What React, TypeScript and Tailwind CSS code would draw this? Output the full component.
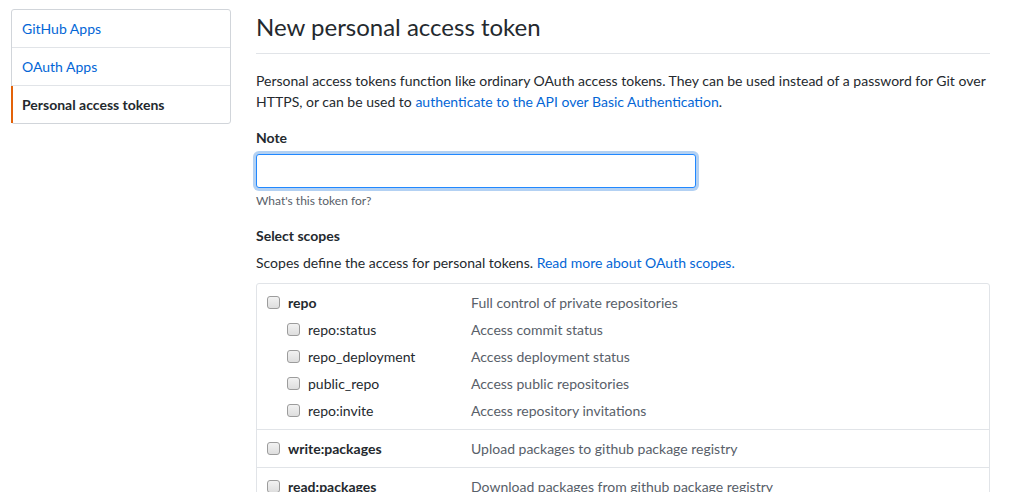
import React from "react";

const font = { fontFamily: 'Lato, "Noto Sans", Arial, sans-serif' };

function Box() {
  return (
    <span className="inline-block w-[13px] h-[13px] rounded-[3px] border border-[#9c9c9c] bg-gradient-to-b from-[#f2f2f2] to-[#dedede] shrink-0" />
  );
}

function TopRow({ name, desc }: { name: string; desc: string }) {
  return (
    <div className="flex items-center h-[21px]">
      <div className="w-[204px] flex items-center">
        <Box />
        <span className="ml-[8px] font-bold text-[#24292e]">{name}</span>
      </div>
      <span className="text-[#586069]">{desc}</span>
    </div>
  );
}

function SubRow({ name, desc }: { name: string; desc: string }) {
  return (
    <div className="flex items-center h-[21px] mt-[6px]">
      <div className="w-[204px] flex items-center pl-[20px]">
        <Box />
        <span className="ml-[8px] text-[#24292e]">{name}</span>
      </div>
      <span className="text-[#586069]">{desc}</span>
    </div>
  );
}

export default function App() {
  return (
    <div className="w-[1030px] h-[492px] overflow-hidden bg-white text-[14px] leading-[21px] text-[#24292e]" style={font}>
      <div className="flex pt-[9px]">
        <div className="ml-[11px] w-[220px] shrink-0">
          <nav className="border border-[#d1d5da] rounded-[3px] bg-white">
            <div className="px-[10px] py-[8px] border-b border-[#e1e4e8] text-[#0366d6]">GitHub Apps</div>
            <div className="px-[10px] py-[8px] border-b border-[#e1e4e8] text-[#0366d6]">OAuth Apps</div>
            <div className="relative px-[10px] py-[8px] font-bold text-[#24292e]">
              <span className="absolute left-[-1px] top-0 bottom-0 w-[2px] bg-[#e36209]" />
              Personal access tokens
            </div>
          </nav>
        </div>
        <div className="ml-[25px] w-[734px]">
          <div className="pb-[8px] border-b border-[#e1e4e8] mb-[16px]">
            <h1 className="text-[24px] leading-[36px] font-normal">New personal access token</h1>
          </div>
          <p className="mb-[15px]">
            <span className="whitespace-nowrap">Personal access tokens function like ordinary OAuth access tokens. They can be used instead of a password for Git over</span>
            <br />
            HTTPS, or can be used to{" "}
            <span className="text-[#0366d6]">authenticate to the API over Basic Authentication</span>.
          </p>
          <div className="font-bold">Note</div>
          <div className="mt-[6px] w-[440px] h-[34px] rounded-[3px] border border-[#2188ff] shadow-[0_0_0_3px_rgba(3,102,214,0.3)] bg-white" />
          <div className="mt-[4px] text-[12px] leading-[18px] text-[#586069]">What's this token for?</div>
          <div className="mt-[15px] font-bold">Select scopes</div>
          <p className="mt-[6px]">
            Scopes define the access for personal tokens.{" "}
            <span className="text-[#0366d6]">Read more about OAuth scopes.</span>
          </p>
          <div className="mt-[10px] border border-[#e1e4e8] rounded-[3px]">
            <div className="px-[10px] pt-[8px] pb-[8px] border-b border-[#e1e4e8]">
              <TopRow name="repo" desc="Full control of private repositories" />
              <div className="mt-[1px]">
                <SubRow name="repo:status" desc="Access commit status" />
                <SubRow name="repo_deployment" desc="Access deployment status" />
                <SubRow name="public_repo" desc="Access public repositories" />
                <SubRow name="repo:invite" desc="Access repository invitations" />
              </div>
            </div>
            <div className="px-[10px] py-[8px] border-b border-[#e1e4e8]">
              <TopRow name="write:packages" desc="Upload packages to github package registry" />
            </div>
            <div className="px-[10px] py-[8px] border-b border-[#e1e4e8]">
              <TopRow name="read:packages" desc="Download packages from github package registry" />
            </div>
          </div>
        </div>
      </div>
    </div>
  );
}
